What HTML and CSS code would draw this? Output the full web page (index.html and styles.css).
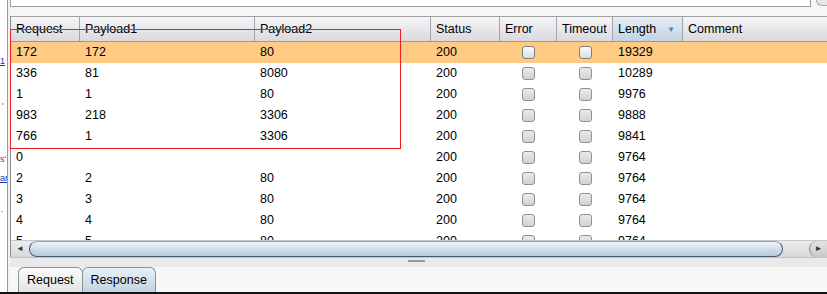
FILE: index.html
```html
<!DOCTYPE html>
<html lang="en">
<head>
    <meta charset="UTF-8">
    <meta name="viewport" content="width=device-width, initial-scale=1.0">
    <title>Intruder Results</title>
    <link rel="stylesheet" href="styles.css">
</head>
<body>
    <div class="window">
        <div class="side">
            <span class="frag blue f1">1</span>
            <span class="frag red f2">'</span>
            <span class="frag red f3">s'</span>
            <span class="frag blue f4">ar</span>
            <span class="frag red f5">.</span>
        </div>
        <div class="main">
            <div class="topbar">
                <div class="search"></div>
                <div class="search-btn"></div>
            </div>

            <div class="results">
                <div class="grid head">
                    <div class="th">Request</div>
                    <div class="th">Payload1</div>
                    <div class="th">Payload2</div>
                    <div class="th">Status</div>
                    <div class="th">Error</div>
                    <div class="th">Timeout</div>
                    <div class="th sorted">Length <span class="sort">&#9660;</span></div>
                    <div class="th last">Comment</div>
                </div>

                <div class="body">
                    <div class="grid row hl">
                        <div>172</div><div>172</div><div>80</div><div>200</div>
                        <div class="chk"><span class="box"></span></div><div class="chk"><span class="box"></span></div>
                        <div>19329</div><div></div>
                    </div>
                    <div class="grid row">
                        <div>336</div><div>81</div><div>8080</div><div>200</div>
                        <div class="chk"><span class="box"></span></div><div class="chk"><span class="box"></span></div>
                        <div>10289</div><div></div>
                    </div>
                    <div class="grid row">
                        <div>1</div><div>1</div><div>80</div><div>200</div>
                        <div class="chk"><span class="box"></span></div><div class="chk"><span class="box"></span></div>
                        <div>9976</div><div></div>
                    </div>
                    <div class="grid row">
                        <div>983</div><div>218</div><div>3306</div><div>200</div>
                        <div class="chk"><span class="box"></span></div><div class="chk"><span class="box"></span></div>
                        <div>9888</div><div></div>
                    </div>
                    <div class="grid row">
                        <div>766</div><div>1</div><div>3306</div><div>200</div>
                        <div class="chk"><span class="box"></span></div><div class="chk"><span class="box"></span></div>
                        <div>9841</div><div></div>
                    </div>
                    <div class="grid row">
                        <div>0</div><div></div><div></div><div>200</div>
                        <div class="chk"><span class="box"></span></div><div class="chk"><span class="box"></span></div>
                        <div>9764</div><div></div>
                    </div>
                    <div class="grid row">
                        <div>2</div><div>2</div><div>80</div><div>200</div>
                        <div class="chk"><span class="box"></span></div><div class="chk"><span class="box"></span></div>
                        <div>9764</div><div></div>
                    </div>
                    <div class="grid row">
                        <div>3</div><div>3</div><div>80</div><div>200</div>
                        <div class="chk"><span class="box"></span></div><div class="chk"><span class="box"></span></div>
                        <div>9764</div><div></div>
                    </div>
                    <div class="grid row">
                        <div>4</div><div>4</div><div>80</div><div>200</div>
                        <div class="chk"><span class="box"></span></div><div class="chk"><span class="box"></span></div>
                        <div>9764</div><div></div>
                    </div>
                    <div class="grid row">
                        <div>5</div><div>5</div><div>80</div><div>200</div>
                        <div class="chk"><span class="box"></span></div><div class="chk"><span class="box"></span></div>
                        <div>9764</div><div></div>
                    </div>
                </div>

                <div class="hscroll">
                    <div class="arrow left">&#9668;</div>
                    <div class="thumb"></div>
                    <div class="track"></div>
                    <div class="arrow right">&#9658;</div>
                </div>

                <!-- red annotation box drawn over the table -->
                <div class="mark"></div>
            </div>

            <div class="splitter"><span class="grip"></span></div>

            <div class="tabs">
                <div class="tab">Request</div>
                <div class="tab active">Response</div>
            </div>
        </div>
    </div>
</body>
</html>
```

FILE: styles.css
```css
body {
    margin: 0;
    background-color: #ffffff;
    font-family: "Liberation Sans", Arial, sans-serif;
    font-size: 12.5px;
    color: #000;
}

.window {
    display: flex;
    width: 827px;
    height: 294px;
    overflow: hidden;
    border-bottom: 2px solid #111;
    box-sizing: border-box;
}

.side {
    position: relative;
    flex-shrink: 0;
    width: 7px;
    border-right: 1px solid #9a9a9a;
    background-color: #fff;
    overflow: hidden;
}

.frag {
    position: absolute;
    left: 0;
    font-size: 9px;
    line-height: 10px;
}

.blue { color: #1a2fb0; text-decoration: underline; }
.red { color: #d01818; }
.f1 { top: 56px; }
.f2 { top: 101px; left: 2px; }
.f3 { top: 154px; }
.f4 { top: 173px; }
.f5 { top: 204px; left: 1px; }

.main {
    position: relative;
    flex: 1;
    min-width: 0;
    display: flex;
    flex-direction: column;
    background-color: #f2f2f2;
    padding-left: 2px;
}

.topbar {
    display: flex;
    height: 17px;
    background-color: #f6f6f6;
}

.search {
    flex-shrink: 0;
    width: 799px;
    height: 6px;
    background-color: #fff;
    border: 1px solid #9c9c9c;
    border-top: none;
}

.search-btn {
    flex: 1;
    height: 5px;
    margin-left: 5px;
    border: 1px solid #a8a8a8;
    border-top: none;
    border-right: none;
    border-radius: 0 0 0 6px;
    background-color: #e8e8e8;
}

.results {
    display: flex;
    flex-direction: column;
    height: 240px;
    background-color: #fff;
    border-left: 1px solid #8c8c8c;
    border-top: 1px solid #a0a0a0;
}

.grid {
    display: grid;
    grid-template-columns: 69px 175px 176px 69px 57px 56px 70px 1fr;
}

.head {
    height: 24px;
    background: linear-gradient(#f7f7f9, #e6e6ea 55%, #d9d9de);
    border-bottom: 1px solid #9a9a9e;
}

.th {
    display: flex;
    align-items: center;
    padding-left: 5px;
    border-right: 1px solid #a4a4a8;
}

.th.last {
    border-right: none;
}

.sorted {
    background: linear-gradient(#e7eef5, #d3dfea 55%, #c3d3e2);
    position: relative;
}

.sort {
    position: absolute;
    right: 7px;
    top: 8px;
    font-size: 8px;
    color: #3f86c8;
}

.body {
    flex: 1;
    overflow: hidden;
}

.row {
    height: 21px;
    line-height: 21px;
}

.row > div {
    padding-left: 5px;
    white-space: nowrap;
}

.row.hl {
    background-color: #ffca83;
}

.row .chk {
    padding-left: 0;
    display: flex;
    align-items: center;
    justify-content: center;
}

.box {
    display: block;
    width: 11px;
    height: 11px;
    border: 1px solid #909193;
    border-radius: 3px;
    background: linear-gradient(#eaeaea, #d2d2d2);
}

.row.hl .box {
    background: linear-gradient(#fafafa, #dcdcdc);
    border-color: #7f8083;
}

.hscroll {
    display: flex;
    height: 16px;
    background: linear-gradient(#ececec, #d8d8d8);
    border-top: 1px solid #c8c8c8;
}

.arrow {
    width: 18px;
    font-size: 8px;
    line-height: 16px;
    text-align: center;
    color: #333;
}

.arrow.right {
    width: 17px;
    border-left: 1px solid #7d8a98;
    border-radius: 8px 0 0 8px;
    background: linear-gradient(#e2e2e2, #c8c8c8);
}

.thumb {
    width: 754px;
    border: 1px solid #46586c;
    border-top-color: #8ea3b8;
    border-radius: 9px;
    background: linear-gradient(#eef3f8, #d4e1ed 45%, #b4c8dc);
    box-sizing: border-box;
}

.track {
    flex: 1;
}

.mark {
    position: absolute;
    left: 2px;
    top: 29px;
    width: 389px;
    height: 118px;
    border: 1px solid #f02020;
}

.splitter {
    height: 9px;
    display: flex;
    justify-content: center;
    background-color: #e9e9e9;
    border-top: 1px solid #c4c4c4;
}

.grip {
    display: block;
    width: 17px;
    height: 2px;
    margin-top: 2px;
    margin-right: 4px;
    background-color: #9a9a9a;
}

.tabs {
    flex: 1;
    display: flex;
    align-items: flex-end;
    padding-left: 8px;
    background-color: #f7f7f7;
}

.tab {
    height: 24px;
    line-height: 24px;
    padding: 0 8px;
    border: 1px solid #8e9296;
    border-bottom: none;
    border-radius: 6px 6px 0 0;
    background: linear-gradient(#fbfbfb, #e3e3e3);
}

.tab.active {
    margin-left: -1px;
    background: linear-gradient(#eaf0f6, #c3d3e3);
}
```
